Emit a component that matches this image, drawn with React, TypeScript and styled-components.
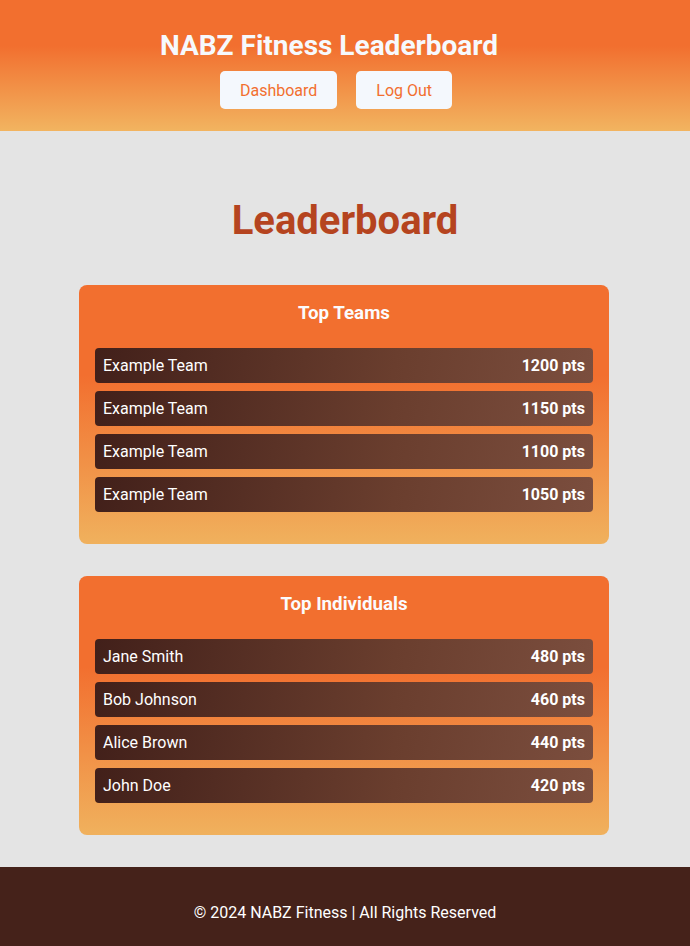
import React from 'react';
import styled, { createGlobalStyle } from 'styled-components';

const GlobalStyle = createGlobalStyle`
	* {
		box-sizing: border-box;
	}
	body {
		margin: 0;
		background: #e4e4e4;
		font-family: Roboto, 'Liberation Sans', sans-serif;
		color: #ffffff;
	}
`

type Entry = {
	name: string
	points: number
}

const teams: Entry[] = [
	{ name: 'Example Team', points: 1200 },
	{ name: 'Example Team', points: 1150 },
	{ name: 'Example Team', points: 1100 },
	{ name: 'Example Team', points: 1050 },
]

const individuals: Entry[] = [
	{ name: 'Jane Smith', points: 480 },
	{ name: 'Bob Johnson', points: 460 },
	{ name: 'Alice Brown', points: 440 },
	{ name: 'John Doe', points: 420 },
]

const Board = ({ title, items }: { title: string; items: Entry[] }) => (
	<Card>
		<CardTitle>{title}</CardTitle>
		<List>
			{items.map((item, i) => (
				<Row key={i}>
					<span>{item.name}</span>
					<Points>{item.points} pts</Points>
				</Row>
			))}
		</List>
	</Card>
)

export default function App() {
	return (
		<>
			<GlobalStyle />
			<Header>
				<SiteTitle>NABZ Fitness Leaderboard</SiteTitle>
				<Nav>
					<NavButton>Dashboard</NavButton>
					<NavButton>Log Out</NavButton>
				</Nav>
			</Header>
			<Main>
				<PageTitle>Leaderboard</PageTitle>
				<Board title='Top Teams' items={teams} />
				<Board title='Top Individuals' items={individuals} />
			</Main>
			<Footer>© 2024 NABZ Fitness | All Rights Reserved</Footer>
		</>
	)
}

const Header = styled.header`
	height: 131px;
	padding: 29px 32px 0 0;
	background: linear-gradient(180deg, #f26f2f 35%, #f2b460 100%);
	display: flex;
	flex-direction: column;
	align-items: center;
`

const SiteTitle = styled.h1`
	margin: 0 0 9px 0;
	font-size: 28px;
	font-weight: 700;
	line-height: 33px;
	color: #f6f9fd;
`

const Nav = styled.nav`
	display: flex;
	gap: 19px;
	margin-left: 14px;
`

const NavButton = styled.button`
	font-family: inherit;
	font-size: 16px;
	height: 38px;
	padding: 0 20px;
	border: none;
	border-radius: 5px;
	background: #f4f8fd;
	color: #f26f2f;
	cursor: pointer;
`

const Main = styled.main`
	padding: 66px 0 32px;
	display: flex;
	flex-direction: column;
	align-items: center;
	gap: 32px;
`

const PageTitle = styled.h2`
	margin: 0 0 9px 0;
	font-size: 40px;
	font-weight: 700;
	line-height: 47px;
	color: #b5441f;
`

const Card = styled.section`
	width: 530px;
	margin-right: 2px;
	padding: 18px 16px 32px;
	border-radius: 8px;
	background: linear-gradient(180deg, #f26f2f 35%, #f0b15d 100%);
`

const CardTitle = styled.h3`
	margin: 0 0 24px 0;
	text-align: center;
	font-size: 18.72px;
	font-weight: 700;
	line-height: 21px;
	color: #fbfbfd;
`

const List = styled.div`
	display: flex;
	flex-direction: column;
	gap: 8px;
`

const Row = styled.div`
	display: flex;
	justify-content: space-between;
	align-items: center;
	height: 35px;
	padding: 0 8px;
	border-radius: 4px;
	font-size: 16px;
	background: linear-gradient(100deg, #42201a 0%, #6a3e2e 60%, #7b4e3e 100%);
`

const Points = styled.span`
	font-weight: 700;
`

const Footer = styled.footer`
	background: #45221a;
	padding: 36px 0 24px;
	text-align: center;
	font-size: 16px;
	line-height: 19px;
`
